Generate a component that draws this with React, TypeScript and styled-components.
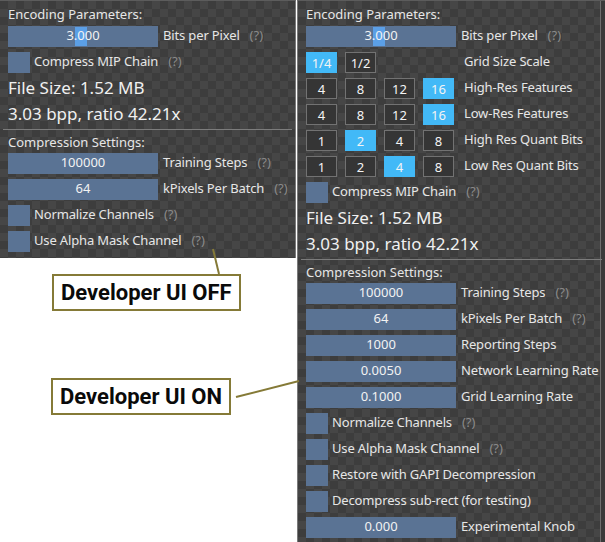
import React from "react";
import styled, { createGlobalStyle } from "styled-components";

const Global = createGlobalStyle`
  html, body { margin: 0; padding: 0; background: #ffffff; }
  body { font-family: "Noto Sans", "DejaVu Sans", sans-serif; }
  * { box-sizing: border-box; }
`;

const Page = styled.div`
  position: relative;
  width: 605px;
  height: 542px;
  display: flex;
  overflow: hidden;
`;

const LeftColumn = styled.div`
  width: 297px;
  display: flex;
  flex-direction: column;
  align-items: flex-start;
`;

const Panel = styled.div<{ $w: number; $h: number; $side: "left" | "right" }>`
  width: ${(p) => p.$w}px;
  height: ${(p) => p.$h}px;
  flex-shrink: 0;
  padding: 5px 8px 0 8px;
  display: flex;
  flex-direction: column;
  color: #e6e6e6;
  font-size: 13px;
  background-color: #3d3d3d;
  background-image: conic-gradient(#464646 25%, transparent 0 50%, #464646 0 75%, transparent 0);
  background-size: 16px 16px;
  border-top: 1px solid #5c5c5c;
  ${(p) =>
    p.$side === "left"
      ? "border-right: 1px solid #7a7a7a;"
      : "border-left: 1px solid #7a7a7a; box-shadow: inset -4px 0 0 #3a3a3a, inset -5px 0 0 #6e6e6e;"}
`;

const Header = styled.div<{ $mt?: number }>`
  height: 15px;
  line-height: 17px;
  margin-top: ${(p) => p.$mt ?? 0}px;
  white-space: nowrap;
`;

const Row = styled.div<{ $mt?: number }>`
  height: 21px;
  margin-top: ${(p) => p.$mt ?? 5}px;
  display: flex;
  align-items: center;
  white-space: nowrap;
`;

const Frame = styled.div`
  position: relative;
  flex-shrink: 0;
  width: 150px;
  height: 21px;
  background: #5a7394;
  color: #f2f2f2;
  display: flex;
  align-items: flex-start;
  justify-content: center;
  line-height: 19px;
`;

const Grab = styled.div`
  position: absolute;
  top: 1px;
  bottom: 1px;
  width: 12px;
  background: #5b9fe6;
`;

const FrameText = styled.span`
  position: relative;
`;

const Label = styled.span<{ $ml?: number }>`
  align-self: flex-start;
  line-height: 19px;
  letter-spacing: -0.15px;
  margin-left: ${(p) => p.$ml ?? 5}px;
  color: #e6e6e6;
`;

const Help = styled.span`
  align-self: flex-start;
  line-height: 19px;
  margin-left: 10px;
  color: #8a8a8a;
`;

const Check = styled.div`
  flex-shrink: 0;
  width: 22px;
  height: 21px;
  background: #5a7394;
`;

const ButtonGroup = styled.div`
  flex-shrink: 0;
  width: 150px;
  display: flex;
  gap: 8px;
`;

const OptButton = styled.div<{ $on?: boolean }>`
  width: 31px;
  height: 21px;
  border: 1px solid ${(p) => (p.$on ? "#42b9f7" : "#727272")};
  background: ${(p) => (p.$on ? "#42b9f7" : "#353535")};
  color: #f4f4f4;
  display: flex;
  align-items: center;
  justify-content: center;
  font-size: 13px;
`;

const Stats = styled.div`
  margin-top: 2px;
  font-size: 17px;
  line-height: 26px;
  color: #f0f0f0;
  white-space: nowrap;
`;

const Separator = styled.div`
  margin: 2px -5px 0 -5px;
  height: 1px;
  background: #7c7c7c;
`;

const Callout = styled.div<{ $mt: number; $ml: number }>`
  margin-top: ${(p) => p.$mt}px;
  margin-left: ${(p) => p.$ml}px;
  height: 37px;
  padding: 0 7px;
  border: 2px solid #857a37;
  background: #ffffff;
  font-family: Roboto, "Liberation Sans", Arial, sans-serif;
  font-weight: 700;
  font-size: 22px;
  line-height: 33px;
  color: #0a0a0a;
  white-space: nowrap;
`;

const Leaders = styled.svg`
  position: absolute;
  left: 0;
  top: 0;
  pointer-events: none;
`;

type Opt = { label: string; values: string[]; on: number };

const SliderRow = () => (
  <Row>
    <Frame>
      <Grab style={{ left: 67 }} />
      <FrameText>3.000</FrameText>
    </Frame>
    <Label>Bits per Pixel</Label>
    <Help>(?)</Help>
  </Row>
);

const CheckRow = ({ label, help }: { label: string; help?: boolean }) => (
  <Row>
    <Check />
    <Label $ml={4}>{label}</Label>
    {help && <Help>(?)</Help>}
  </Row>
);

const InputRow = ({
  value,
  label,
  help,
  mt,
}: {
  value: string;
  label: string;
  help?: boolean;
  mt?: number;
}) => (
  <Row $mt={mt}>
    <Frame>{value}</Frame>
    <Label>{label}</Label>
    {help && <Help>(?)</Help>}
  </Row>
);

const OptRow = ({ opt }: { opt: Opt }) => (
  <Row>
    <ButtonGroup>
      {opt.values.map((v, i) => (
        <OptButton key={v} $on={i === opt.on}>
          {v}
        </OptButton>
      ))}
    </ButtonGroup>
    <Label $ml={8}>{opt.label}</Label>
  </Row>
);

const options: Opt[] = [
  { label: "Grid Size Scale", values: ["1/4", "1/2"], on: 0 },
  { label: "High-Res Features", values: ["4", "8", "12", "16"], on: 3 },
  { label: "Low-Res Features", values: ["4", "8", "12", "16"], on: 3 },
  { label: "High Res Quant Bits", values: ["1", "2", "4", "8"], on: 1 },
  { label: "Low Res Quant Bits", values: ["1", "2", "4", "8"], on: 2 },
];

const StatsBlock = () => (
  <Stats>
    <div>File Size: 1.52 MB</div>
    <div>3.03 bpp, ratio 42.21x</div>
  </Stats>
);

export default function App() {
  return (
    <Page>
      <Global />
      <LeftColumn>
        <Panel $w={296} $h={258} $side="left">
          <Header>Encoding Parameters:</Header>
          <SliderRow />
          <CheckRow label="Compress MIP Chain" help />
          <StatsBlock />
          <Separator />
          <Header $mt={4}>Compression Settings:</Header>
          <InputRow value="100000" label="Training Steps" help mt={4} />
          <InputRow value="64" label="kPixels Per Batch" help />
          <CheckRow label="Normalize Channels" help />
          <CheckRow label="Use Alpha Mask Channel" help />
        </Panel>
        <Callout $mt={16} $ml={52}>Developer UI OFF</Callout>
        <Callout $mt={67} $ml={51}>Developer UI ON</Callout>
      </LeftColumn>
      <Panel $w={308} $h={542} $side="right">
        <Header>Encoding Parameters:</Header>
        <SliderRow />
        {options.map((o) => (
          <OptRow key={o.label} opt={o} />
        ))}
        <CheckRow label="Compress MIP Chain" help />
        <StatsBlock />
        <Separator />
        <Header $mt={4}>Compression Settings:</Header>
        <InputRow value="100000" label="Training Steps" help mt={4} />
        <InputRow value="64" label="kPixels Per Batch" help />
        <InputRow value="1000" label="Reporting Steps" />
        <InputRow value="0.0050" label="Network Learning Rate" />
        <InputRow value="0.1000" label="Grid Learning Rate" />
        <CheckRow label="Normalize Channels" help />
        <CheckRow label="Use Alpha Mask Channel" help />
        <CheckRow label="Restore with GAPI Decompression" />
        <CheckRow label="Decompress sub-rect (for testing)" />
        <InputRow value="0.000" label="Experimental Knob" />
      </Panel>
      <Leaders width={605} height={542} viewBox="0 0 605 542">
        <line x1={213} y1={249} x2={219} y2={274} stroke="#857a37" strokeWidth={2} />
        <line x1={236} y1={397} x2={299} y2={381} stroke="#857a37" strokeWidth={2} />
      </Leaders>
    </Page>
  );
}
